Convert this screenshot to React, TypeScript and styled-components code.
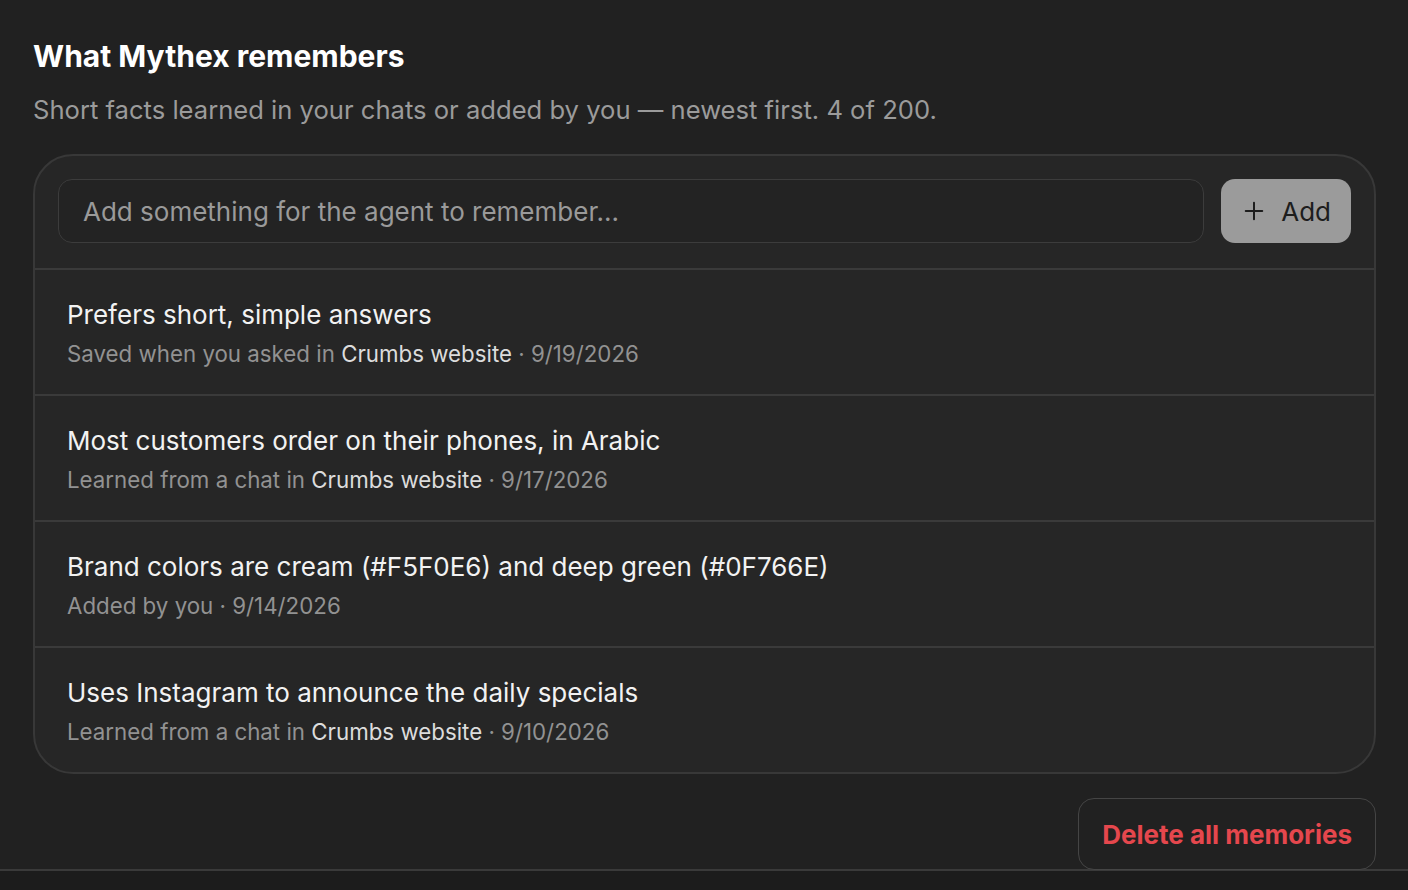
import React from 'react';
import styled, { createGlobalStyle } from 'styled-components';

const GlobalStyle = createGlobalStyle`
    html, body {
        margin: 0;
        padding: 0;
        background: #1c1c1c;
    }
    body {
        font-family: Inter, "Noto Sans", sans-serif;
        -webkit-font-smoothing: antialiased;
    }
    * { box-sizing: border-box; }
`;

interface Memory {
    text: string;
    prefix: string;
    source?: string;
    date: string;
}

const memories: Memory[] = [
    { text: 'Prefers short, simple answers', prefix: 'Saved when you asked in', source: 'Crumbs website', date: '9/19/2026' },
    { text: 'Most customers order on their phones, in Arabic', prefix: 'Learned from a chat in', source: 'Crumbs website', date: '9/17/2026' },
    { text: 'Brand colors are cream (#F5F0E6) and deep green (#0F766E)', prefix: 'Added by you', date: '9/14/2026' },
    { text: 'Uses Instagram to announce the daily specials', prefix: 'Learned from a chat in', source: 'Crumbs website', date: '9/10/2026' },
];

const PlusIcon = (): React.ReactElement => (
    <svg width="22" height="22" viewBox="0 0 24 24" fill="none" stroke="currentColor" strokeWidth="2.2" strokeLinecap="round">
        <path d="M12 3v18M3 12h18" />
    </svg>
);

export default function App(): React.ReactElement {
    return (
        <>
            <GlobalStyle />
            <Section>
                <Title>What Mythex remembers</Title>
                <Subtitle>Short facts learned in your chats or added by you — newest first. 4 of 200.</Subtitle>
                <Panel>
                    <AddRow>
                        <Input placeholder="Add something for the agent to remember..." />
                        <AddButton type="button">
                            <PlusIcon />
                            Add
                        </AddButton>
                    </AddRow>
                    {memories.map((m) => (
                        <Item key={m.text}>
                            <ItemText>{m.text}</ItemText>
                            <Meta>
                                {m.prefix}
                                {m.source && <> <Source>{m.source}</Source></>}
                                {' · '}
                                {m.date}
                            </Meta>
                        </Item>
                    ))}
                </Panel>
                <Actions>
                    <DangerButton type="button">Delete all memories</DangerButton>
                </Actions>
            </Section>
            <Footer />
        </>
    );
}

const Section = styled.section`
    background: #212121;
    padding: 36px 32px 0 33px;
    border-bottom: 2px solid #3a3a3a;
    height: 871px;
`;

const Title = styled.h2`
    margin: 0;
    font-size: 30px;
    line-height: 40px;
    font-weight: 700;
    color: #ffffff;
`;

const Subtitle = styled.p`
    margin: 18px 0 0;
    font-size: 25.6px;
    line-height: 32px;
    color: #9b9b9b;
`;

const Panel = styled.div`
    margin-top: 28px;
    background: #262626;
    border: 2px solid #383838;
    border-radius: 40px;
    overflow: hidden;
`;

const AddRow = styled.div`
    display: flex;
    gap: 17px;
    padding: 23px 23px 25px 23px;
    border-bottom: 2px solid #3a3a3a;
`;

const Input = styled.input`
    flex: 1;
    height: 64px;
    padding: 0 24px;
    background: #232323;
    border: 1.5px solid #3c3c3c;
    border-radius: 14px;
    font-family: inherit;
    font-size: 26px;
    color: #eee;
    outline: none;

    &::placeholder {
        color: #9a9a9a;
    }
`;

const AddButton = styled.button`
    display: flex;
    align-items: center;
    gap: 16px;
    height: 64px;
    padding: 0 20px 0 22px;
    background: #9b9b9b;
    color: #1d1d1d;
    border: none;
    border-radius: 14px;
    font-family: inherit;
    font-size: 26px;
    font-weight: 400;
`;

const Item = styled.div`
    height: 126px;
    padding: 27px 32px 0;
    border-bottom: 2px solid #3a3a3a;

    &:last-child {
        height: 124px;
        border-bottom: none;
    }
`;

const ItemText = styled.div`
    font-size: 26px;
    line-height: 36px;
    color: #f2f2f2;
`;

const Meta = styled.div`
    margin-top: 6px;
    font-size: 22.3px;
    line-height: 30px;
    color: #929292;
`;

const Source = styled.span`
    color: #dcdcdc;
`;

const Actions = styled.div`
    display: flex;
    justify-content: flex-end;
    margin-top: 24px;
`;

const DangerButton = styled.button`
    height: 72px;
    padding: 0 23px;
    background: transparent;
    border: 1.5px solid #454545;
    border-radius: 16px;
    font-family: inherit;
    font-size: 26px;
    font-weight: 700;
    color: #e5474d;
`;

const Footer = styled.div`
    height: 40px;
    background: #1c1c1c;
`;
